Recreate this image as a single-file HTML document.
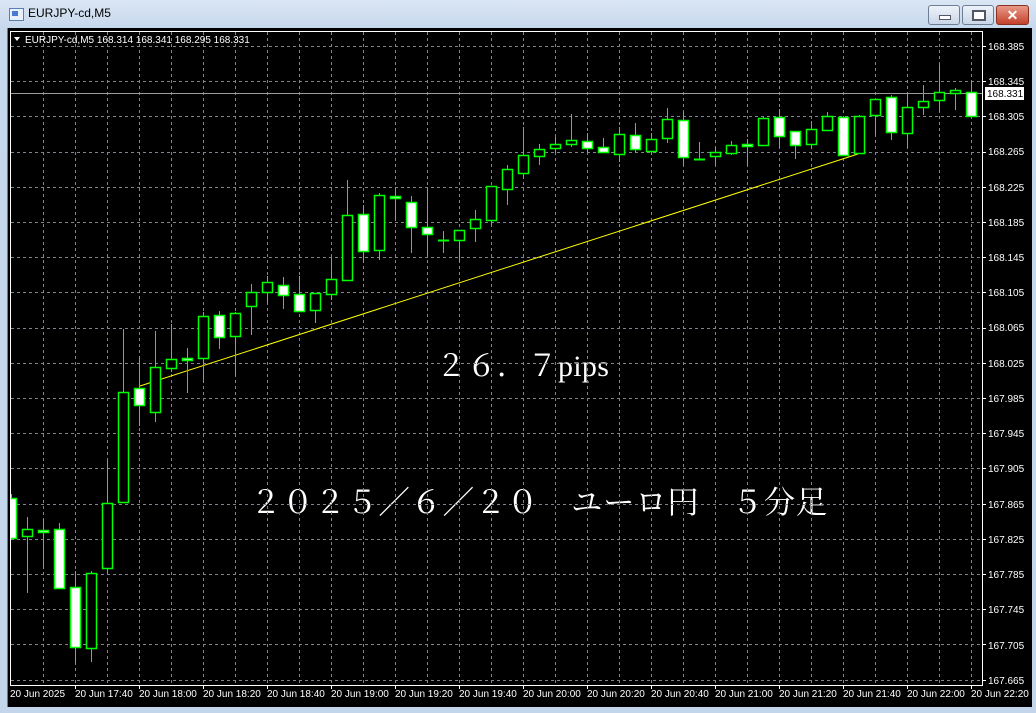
<!DOCTYPE html>
<html><head><meta charset="utf-8"><style>
html,body{margin:0;padding:0;width:1036px;height:713px;overflow:hidden;background:#c7d8ec;}
.win{position:absolute;left:0;top:0;width:1036px;height:713px;background:linear-gradient(#dae6f3,#c6d7ec 30px,#c3d5eb);}
.title{position:absolute;left:28px;top:6px;font:12px "Liberation Sans",sans-serif;color:#000;}
.btn{position:absolute;top:5px;height:18px;border:1px solid #6d7d95;border-radius:3px;background:linear-gradient(#eef3fa,#c9d6e7);}
svg{position:absolute;left:0;top:0;}
</style></head><body><div class="win">
<div style="position:absolute;left:9px;top:8px;width:13px;height:11px;border:1px solid #5a7fb5;background:#e8f0fb;"></div>
<div style="position:absolute;left:12px;top:11px;width:6px;height:5px;background:#4a7ad0;"></div>
<div class="title">EURJPY-cd,M5</div>
<div class="btn" style="left:928px;width:30px;"><div style="position:absolute;left:10px;top:9px;width:10px;height:3px;background:#fff;border:1px solid #556;"></div></div>
<div class="btn" style="left:962px;width:30px;"><div style="position:absolute;left:9px;top:4px;width:10px;height:7px;border:2px solid #556;background:#fff;"></div></div>
<div class="btn" style="left:996px;width:31px;background:linear-gradient(#e89a88,#c4422c);border-color:#8a2f22;"><div style="position:absolute;left:0;top:0;width:31px;text-align:center;font:bold 14px 'Liberation Sans',sans-serif;color:#fff;line-height:18px;">✕</div></div>
<svg width="1036" height="713" xmlns="http://www.w3.org/2000/svg">
<rect x="7" y="28" width="1025" height="679" fill="#000"/>
<line x1="7.5" y1="28" x2="7.5" y2="707" stroke="#777"/>
<g font-family="'Liberation Serif','Noto Serif CJK JP',serif" fill="#fff">
<text x="436" y="376" font-size="30" letter-spacing="0.5">２６．７<tspan font-size="30" letter-spacing="0.3">pips</tspan></text>
<text x="250" y="513" font-size="31.5" letter-spacing="0.6">２０２５／６／２０　ユーロ円　５分足</text>
</g>
<g id="grid" stroke="#7c8591" stroke-width="1" stroke-dasharray="3,3"></g>
<line x1="10" y1="93.5" x2="982" y2="93.5" stroke="#9a9a9a"/>
<line x1="140" y1="386" x2="858" y2="154" stroke="#ffff00" stroke-width="1"/>
<clipPath id="pc"><rect x="10" y="31" width="972" height="654"/></clipPath>
<g id="candles" clip-path="url(#pc)"></g>
<rect x="10.5" y="31.5" width="972" height="654" fill="none" stroke="#fff"/>
<g id="ticks" stroke="#fff"></g>
<g font-family="'Liberation Sans',sans-serif" font-size="10" fill="#fff">
<path d="M14 37 L20 37 L17 41 Z" fill="#fff"/>
<text x="25" y="43">EURJPY-cd,M5  168.314 168.341 168.295 168.331</text>
<text x="988" y="50">168.385</text>
<text x="988" y="85">168.345</text>
<text x="988" y="120">168.305</text>
<text x="988" y="155">168.265</text>
<text x="988" y="191">168.225</text>
<text x="988" y="226">168.185</text>
<text x="988" y="261">168.145</text>
<text x="988" y="296">168.105</text>
<text x="988" y="331">168.065</text>
<text x="988" y="367">168.025</text>
<text x="988" y="402">167.985</text>
<text x="988" y="437">167.945</text>
<text x="988" y="472">167.905</text>
<text x="988" y="508">167.865</text>
<text x="988" y="543">167.825</text>
<text x="988" y="578">167.785</text>
<text x="988" y="613">167.745</text>
<text x="988" y="649">167.705</text>
<text x="988" y="684">167.665</text>
<rect x="985" y="87" width="39" height="13" fill="#fff"/>
<text x="987" y="97" fill="#000">168.331</text>
<text x="10" y="697">20 Jun 2025</text>
<text x="75" y="697">20 Jun 17:40</text>
<text x="139" y="697">20 Jun 18:00</text>
<text x="203" y="697">20 Jun 18:20</text>
<text x="267" y="697">20 Jun 18:40</text>
<text x="331" y="697">20 Jun 19:00</text>
<text x="395" y="697">20 Jun 19:20</text>
<text x="459" y="697">20 Jun 19:40</text>
<text x="523" y="697">20 Jun 20:00</text>
<text x="587" y="697">20 Jun 20:20</text>
<text x="651" y="697">20 Jun 20:40</text>
<text x="715" y="697">20 Jun 21:00</text>
<text x="779" y="697">20 Jun 21:20</text>
<text x="843" y="697">20 Jun 21:40</text>
<text x="907" y="697">20 Jun 22:00</text>
<text x="971" y="697">20 Jun 22:20</text>
</g>
</svg>
<script>
var NS="http://www.w3.org/2000/svg";
function el(p,t,a){var e=document.createElementNS(NS,t);for(var k in a)e.setAttribute(k,a[k]);p.appendChild(e);return e;}
var g=document.getElementById('grid');
for(var i=0;i<19;i++){var y=Math.round(46+35.2*i)+.5;el(g,'line',{x1:11,y1:y,x2:982,y2:y});}
for(var x=43;x<982;x+=32){el(g,'line',{x1:x+.5,y1:32,x2:x+.5,y2:685});}
var t=document.getElementById('ticks');
for(var i=0;i<19;i++){var y=Math.round(46+35.2*i)+.5;el(t,'line',{x1:983,y1:y,x2:986,y2:y});}
for(var x=75;x<982;x+=64){el(t,'line',{x1:x+.5,y1:686,x2:x+.5,y2:689});}
var C=[[498,538,494,540,1],[529,536,517,593,0],[530,532,519,569,1],[529,588,523,588,1],[587,647,571,663,1],[573,648,571,662,0],[503,568,461,573,0],[392,502,329,502,0],[388,405,356,426,1],[367,412,331,422,0],[359,368,324,372,0],[358,360,348,393,1],[316,358,312,383,0],[315,337,311,349,1],[313,336,312,376,0],[292,306,284,335,0],[282,292,276,303,0],[285,295,277,309,1],[294,311,276,312,1],[293,310,293,323,0],[279,294,258,300,0],[215,280,180,280,0],[214,251,205,263,1],[195,250,193,260,0],[196,198,188,221,1],[202,227,196,253,1],[227,234,188,256,1],[240,240,231,253,0],[230,240,230,262,0],[219,228,210,242,0],[186,220,186,225,0],[169,189,165,205,0],[155,173,127,178,0],[149,156,144,165,0],[144,148,137,153,0],[140,144,114,147,0],[141,148,133,153,1],[147,152,138,153,1],[134,154,127,162,0],[135,149,123,153,1],[139,151,133,155,0],[119,138,108,143,0],[120,157,112,165,1],[159,159,142,160,0],[152,156,147,165,0],[145,153,141,155,0],[144,146,139,165,1],[118,145,117,146,0],[117,136,109,148,1],[131,145,131,159,1],[129,144,121,149,0],[116,130,112,131,0],[117,155,116,155,1],[116,153,115,153,0],[99,115,99,135,0],[97,132,95,140,1],[107,133,92,148,0],[101,107,85,115,0],[92,100,65,112,0],[90,93,88,110,0],[92,116,81,117,1]];
var cg=document.getElementById('candles');
C.forEach(function(c,k){var x=11+16*k;
el(cg,'line',{x1:x+.5,y1:c[2],x2:x+.5,y2:c[3],stroke:'#00ff00'});
if(c[1]-c[0]<1){el(cg,'line',{x1:x-5,y1:c[0]+.5,x2:x+6,y2:c[0]+.5,stroke:'#00ff00','stroke-width':2});}
else el(cg,'rect',{x:x-4.5,y:c[0]+.5,width:10,height:c[1]-c[0],fill:c[4]?'#fff':'#000',stroke:'#00ff00','stroke-width':1.5});
});
</script>
</div></body></html>
